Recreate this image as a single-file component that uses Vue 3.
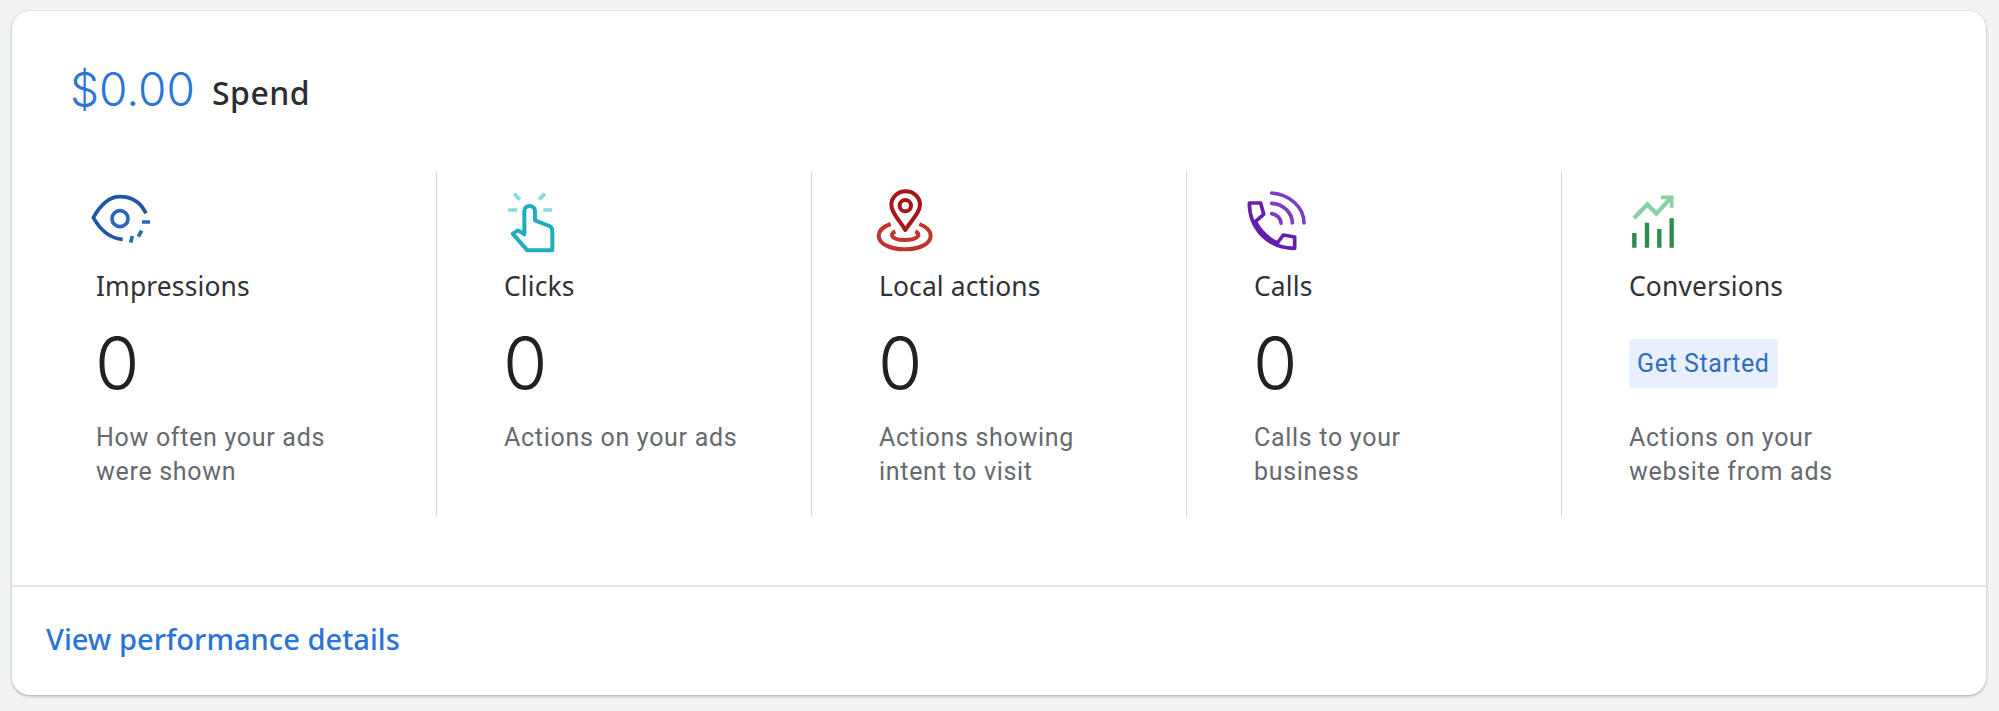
<script setup>
const items = [
  { key: 'eye', title: 'Impressions', value: '0', desc: ['How often your ads', 'were shown'] },
  { key: 'click', title: 'Clicks', value: '0', desc: ['Actions on your ads'] },
  { key: 'pin', title: 'Local actions', value: '0', desc: ['Actions showing', 'intent to visit'] },
  { key: 'call', title: 'Calls', value: '0', desc: ['Calls to your', 'business'] },
  { key: 'chart', title: 'Conversions', cta: 'Get Started', desc: ['Actions on your', 'website from ads'] },
]
</script>

<template>
  <div class="page">
    <section class="card">
      <div class="body">
        <header class="head">
          <span class="amount">$0.00</span>
          <span class="spend">Spend</span>
        </header>
        <div class="metrics">
          <article v-for="m in items" :key="m.key" class="metric">
            <div class="icon-slot">
              <svg v-if="m.key === 'eye'" class="ico" width="120" height="90" viewBox="0 0 360 270" fill="none" stroke="#1f56a8" stroke-width="11">
                <path d="M228 127C212 94 184 77 150 77C115 77 90 104 70 140C90 175 118 203 158 205"/>
                <circle cx="150" cy="143" r="24" stroke="#2768bc"/>
                <path d="M216 153H240M215 179L205 197M187 195L182 215" stroke="#2768bc" stroke-width="11"/>
              </svg>
              <svg v-else-if="m.key === 'click'" class="ico" width="120" height="90" viewBox="-36 0 360 270" fill="none" stroke="#20adc0" stroke-width="12">
                <path d="M72 68L90 86M165 68L147 86M54 117H82M160 117H186" stroke="#8ed6e0" stroke-width="11"/>
                <path d="M103 180V120C103 100 135 100 135 120V148L178 165C184 168 187 173 187 180V238H112L68 188L84 178L103 190Z" stroke-linejoin="round"/>
              </svg>
              <svg v-else-if="m.key === 'pin'" class="ico" width="120" height="90" viewBox="-21 3 360 270" fill="none" stroke="#a8161c" stroke-width="12">
                <path d="M136 180C118 150 94 128 94 104A43 40 0 0 1 180 104C180 128 155 150 136 180Z" stroke-linejoin="round"/>
                <circle cx="136" cy="107" r="17"/>
                <path d="M92 162C70 170 56 182 56 197C56 222 92 238 134 238C178 238 212 222 212 197C212 182 198 170 178 162" stroke="#c0342c"/>
                <path d="M106 184C88 192 92 210 134 210C176 210 184 192 166 184" stroke="#c0342c"/>
              </svg>
              <svg v-else-if="m.key === 'call'" class="ico" width="120" height="90" viewBox="-6 0 360 270" fill="none" stroke="#6420ac" stroke-width="11">
                <path d="M58 96H92L101 130L76 152C92 182 112 202 142 216L160 192L194 198V232C112 232 58 170 58 96Z" stroke-linejoin="round"/>
                <path d="M125 66C178 70 222 108 222 156" stroke="#7c3cc4" stroke-linecap="round"/>
                <path d="M125 97C158 98 187 124 187 156" stroke="#7c3cc4" stroke-linecap="round"/>
                <path d="M125 128C140 130 153 142 153 157" stroke="#7c3cc4" stroke-linecap="round"/>
              </svg>
              <svg v-else class="ico" width="120" height="90" viewBox="-18 0 360 270" fill="none">
                <path d="M75 142L115 100L142 128L186 80" stroke="#8ad0a4" stroke-width="13"/>
                <path d="M156 79H188V110" stroke="#8ad0a4" stroke-width="11"/>
                <path d="M76 186V230M114 155V230M151 174V230M188 142V230" stroke="#2e8b50" stroke-width="13"/>
              </svg>
            </div>
            <h3 class="title">{{ m.title }}</h3>
            <div v-if="m.value" class="value">{{ m.value }}</div>
            <div v-else class="cta-row"><button class="cta">{{ m.cta }}</button></div>
            <p class="desc"><span v-for="l in m.desc" :key="l" class="line">{{ l }}</span></p>
          </article>
        </div>
      </div>
      <footer class="foot"><a class="link">View performance details</a></footer>
    </section>
  </div>
</template>

<style>
html, body { margin: 0; background: #f1f3f4; }
</style>

<style scoped>
.page {
  width: 1999px;
  height: 711px;
  padding: 11px 13px 16px 12px;
  box-sizing: border-box;
  background: #f1f3f4;
  overflow: hidden;
}
.card {
  height: 100%;
  background: #fff;
  border-radius: 18px;
  box-shadow: 0 1px 3px rgba(60, 64, 67, 0.45);
  display: flex;
  flex-direction: column;
}
.body { flex: 1; padding: 52px 0 0 58px; }
.head { display: flex; align-items: baseline; gap: 17px; height: 108px; }
.amount { font: 350 46px/52px "Inter", sans-serif; color: #2a74d8; }
.spend { font: 500 32px/36px "Noto Sans", sans-serif; color: #2c2d30; letter-spacing: 0.5px; position: relative; top: -1px; }
.metrics { display: flex; margin-left: 26px; }
.metric { width: 375px; height: 346px; padding-left: 67px; box-sizing: border-box; border-left: 1px solid #d6d8db; }
.metric:first-child { width: 340px; padding-left: 0; border-left: 0; }
.icon-slot { height: 62px; margin-left: -26px; }
.ico { display: block; }
.title { margin: 36px 0 0; font: 400 26.400px/34px "Noto Sans", sans-serif; letter-spacing: 0.15px; color: #303134; }
.value { margin-top: 24px; height: 72px; font: 350 72px/72px "Inter", sans-serif; color: #202124; margin-left: -1px; }
.cta-row { margin-top: 24px; height: 72px; display: flex; align-items: center; }
.cta {
  border: 0; background: #e8f0fe; color: #2f6cc0; border-radius: 3px;
  font: 400 25px/49px "Roboto", sans-serif; letter-spacing: 0.6px;
  padding: 0 8px; height: 49px;
}
.desc { margin: 22px 0 0; font: 400 25px/34px "Roboto", sans-serif; letter-spacing: 0.7px; color: #66696e; }
.line { display: block; }
.foot { height: 110px; border-top: 2px solid #e3e5e7; box-sizing: border-box; padding: 34px 0 0 34px; }
.link { font: 500 29.100px/36px "Noto Sans", sans-serif; color: #2a74d8; }
</style>
